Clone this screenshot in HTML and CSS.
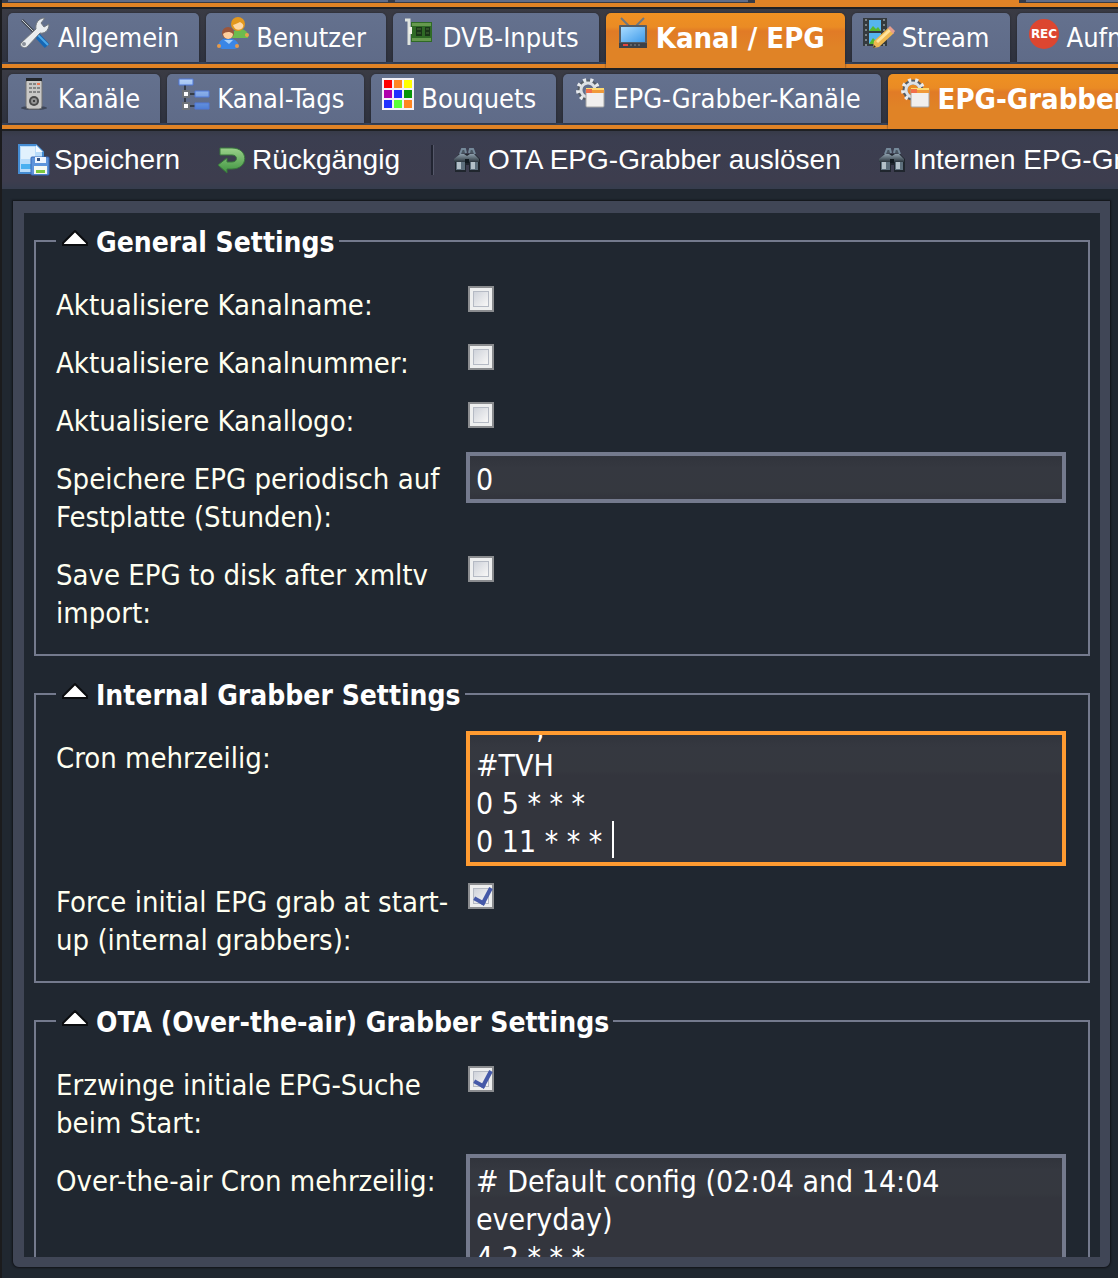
FILE: index.html
```html
<!DOCTYPE html>
<html lang="de">
<head>
  <meta charset="UTF-8">
  <meta name="viewport" content="width=device-width, initial-scale=1.0">
  <title>Tvheadend</title>
  <link rel="stylesheet" href="styles.css">
</head>
<body>
  <svg class="defs" aria-hidden="true">
    <defs>
      <linearGradient id="blue" x1="0" y1="0" x2="0" y2="1"><stop offset="0" stop-color="#b7d3f8"/><stop offset="1" stop-color="#4f7fd6"/></linearGradient>
      <linearGradient id="sky" x1="0" y1="0" x2="1" y2="1"><stop offset="0" stop-color="#a9dcff"/><stop offset="1" stop-color="#3f9bea"/></linearGradient>
      <linearGradient id="metal" x1="0" y1="0" x2="0" y2="1"><stop offset="0" stop-color="#8fa0ad"/><stop offset="1" stop-color="#2c363e"/></linearGradient>
      <linearGradient id="green" x1="0" y1="0" x2="0" y2="1"><stop offset="0" stop-color="#9ad08a"/><stop offset="1" stop-color="#3f9440"/></linearGradient>
    </defs>
    <symbol id="icon-grab" viewBox="0 0 32 32">
      <circle cx="14" cy="12" r="8" fill="none" stroke="#555d66" stroke-width="5"/>
      <circle cx="14" cy="12" r="10" fill="none" stroke="#e8ebee" stroke-width="4" stroke-dasharray="3 4"/>
      <circle cx="14" cy="12" r="7" fill="none" stroke="#dde1e5" stroke-width="3"/>
      <rect x="12" y="11" width="18" height="18" rx="1" fill="#f1efee" stroke="#a4a4a4"/>
      <path d="M12 11h18v4H12z" fill="#f09a3a"/>
      <path d="M12 10h18v2H12z" fill="#ffd970"/>
      <path d="M12 11h6v4h-6z" fill="#f2704c"/>
    </symbol>
    <symbol id="icon-find" viewBox="0 0 32 32">
      <path d="M3 15l4-5h16l5 5v13H17v-7h-3v7H3z" fill="#20262e"/>
      <path d="M2 15l6-5h4l3 2 3-2h4l5 5v3H2z" fill="url(#metal)"/>
      <path d="M8 10l2-5h3l1 4M23 10l-2-5h-3l-1 4" fill="#4a5763" stroke="#75899a" stroke-width="2"/>
      <path d="M4 18h9v8H4zM18 18h8v8h-8z" fill="#5d6f7c"/>
      <path d="M5 18h4v7H5zM19 18h4v7h-4z" fill="#b4c1c9"/>
      <path d="M13 15h4v4h-4z" fill="#121a20"/>
    </symbol>
  </svg>

  <div class="tabs-above"><i></i><i></i><i class="active"></i><i></i></div>

  <nav class="tabs">
    <a class="tab" href="#">
      <svg class="icon" viewBox="0 0 32 32"><path d="M3 3l12 12" stroke="#444b55" stroke-width="3"/><path d="M3 3l12 12" stroke="#c9d0d6" stroke-width="1"/><path d="M16 16l12 13" stroke="#1567b4" stroke-width="6"/><path d="M17 16l12 12" stroke="#4ca7e8" stroke-width="2"/><path d="M2 26L17 12c-1-5 2-11 9-11l-4 5 3 4 5-3c0 7-5 10-9 9L8 30c-3 2-8-1-6-4z" fill="#e9ecee" stroke="#71777e"/><circle cx="5" cy="27" r="2" fill="#8b9199"/></svg>
      Allgemein</a>
    <a class="tab" href="#">
      <svg class="icon" viewBox="0 0 32 32"><path d="M13 21c0-10 17-12 18-3v3z" fill="#6dbb4e"/><circle cx="30" cy="18" r="2" fill="#e9a34a"/><circle cx="21" cy="7" r="7" fill="#e3981e"/><path d="M16 8c3-1 5-2 7-3 3 2 4 3 3 5-2 4-8 4-10-2z" fill="#ffd8a5"/><path d="M1 30c0-12 20-12 21 0l-4 2H5z" fill="#3a86e6"/><path d="M7 23l5 4 4-4" fill="#a3cffb"/><circle cx="2" cy="29" r="2" fill="#e79a48"/><circle cx="20" cy="29" r="2" fill="#e79a48"/><circle cx="11" cy="16" r="6" fill="#9b563b"/><path d="M6 17c2-2 7-3 10 0 0 6-9 7-10 0z" fill="#ffcf9d"/></svg>
      Benutzer</a>
    <a class="tab" href="#">
      <svg class="icon" viewBox="0 0 32 32"><path d="M7 5h21v20H7z" fill="#2f6a25"/><path d="M8 6h19v3H8zM8 21h19v3H8z" fill="#66994e"/><path d="M12 10h6v9h-6zM21 10h5v9h-5z" fill="#1a3518"/><path d="M13 12h4M13 16h4M22 12h3M22 16h3" stroke="#4b7138"/><path d="M1 3h4v25" fill="none" stroke="#dfe4df" stroke-width="3"/><path d="M5 10h3v7H5z" fill="#f1f1e7"/></svg>
      DVB-Inputs</a>
    <a class="tab active" href="#">
      <svg class="icon" viewBox="0 0 32 32"><path d="M4 1l9 9M27 1l-9 9" stroke="#6f777f" stroke-width="2"/><rect x="2" y="8" width="28" height="23" rx="1" fill="#555d65"/><path d="M4 10h24v15H4z" fill="url(#sky)"/><path d="M2 26h28v5H2z" fill="#3d4147"/><path d="M6 28h5" stroke="#e4443c" stroke-width="2"/><path d="M13 28h12" stroke="#888" stroke-dasharray="2 2"/></svg>
      Kanal / EPG</a>
    <a class="tab" href="#">
      <svg class="icon" viewBox="0 0 32 32"><path d="M0 1h24v28H0z" fill="#343a3e"/><path d="M3 2v27M21 2v27" stroke="#7c8488" stroke-width="2" stroke-dasharray="2 3"/><path d="M6 3h12v11H6zM6 16h12v11H6z" fill="#56b5ee"/><path d="M6 14l4-5 3 3 2-2 3 4zM6 27l4-6 3 3 5-3v6z" fill="#57b82f"/><path d="M10 31l1-7 14-13 6 5-15 14z" fill="#efb850"/><path d="M13 24l13-12 2 2-13 12z" fill="#ffe39b"/><path d="M25 11l2-2 5 5-2 3z" fill="#e69e8d"/><path d="M10 31l1-3 2 2z" fill="#333"/></svg>
      Stream</a>
    <a class="tab" href="#">
      <svg class="icon" viewBox="0 0 32 32"><circle cx="16" cy="17" r="15" fill="#dc4630"/><text class="rec" x="16" y="21" text-anchor="middle">REC</text></svg>
      Aufnahmen</a>
  </nav>

  <nav class="tabs">
    <a class="tab" href="#">
      <svg class="icon" viewBox="0 0 32 32"><ellipse cx="15" cy="30" rx="13" ry="2" fill="#3e4659"/><rect x="7" y="1" width="16" height="30" rx="3" fill="#c9c8c6" stroke="#727272"/><path d="M7 0h16v3H7z" fill="#24272b"/><path d="M10 6h11M10 10h11M10 14h11" stroke="#858585" stroke-width="2" stroke-dasharray="3 1"/><path d="M18 5h3v2h-3z" fill="#ee7753"/><circle cx="15" cy="23" r="5" fill="#4b4b4b"/><circle cx="15" cy="23" r="3" fill="#949494"/><circle cx="15" cy="23" r="1" fill="#222"/></svg>
      Kanäle</a>
    <a class="tab" href="#">
      <svg class="icon" viewBox="0 0 32 32"><path d="M7 7v21M8 16h9M8 28h9" stroke="#363d48" stroke-width="2"/><path d="M1 1h14v6H1zM17 13h14v6H17zM17 25h14v6H17z" fill="url(#blue)" stroke="#5079d8"/><path d="M4 12h8v8H4zM4 24h8v8H4z" fill="#6e7379"/><path d="M6 14h4v4H6zM6 26h4v4H6z" fill="#fff"/></svg>
      Kanal-Tags</a>
    <a class="tab" href="#">
      <svg class="icon" viewBox="0 0 32 32"><path d="M0 0h32v32H0z" fill="#f4f1f7"/><path d="M2 2h8v8H2z" fill="#f00"/><path d="M12 2h8v8h-8zM22 22h8v8h-8z" fill="#ff8620"/><path d="M22 2h8v8h-8z" fill="#ff0"/><path d="M2 12h8v8H2z" fill="#b000ac"/><path d="M12 12h8v8h-8zM2 22h8v8H2z" fill="#2030ff"/><path d="M22 12h8v8h-8z" fill="#079607"/><path d="M12 22h8v8h-8z" fill="#58ff38"/></svg>
      Bouquets</a>
    <a class="tab" href="#">
      <svg class="icon"><use href="#icon-grab"/></svg>
      EPG-Grabber-Kanäle</a>
    <a class="tab active" href="#">
      <svg class="icon"><use href="#icon-grab"/></svg>
      EPG-Grabber</a>
  </nav>

  <div class="toolbar">
    <button type="button">
      <svg class="icon" viewBox="0 0 32 32"><path d="M1 1h17l7 7v21H1z" fill="#b9dcfa" stroke="#458cd2" stroke-width="2"/><path d="M3 3h14v12H3z" fill="#e1f1fd"/><path d="M18 1v7h7z" fill="#f4faff"/><path d="M3 20h10v5H3z" fill="#4bb0f0"/><rect x="13" y="13" width="18" height="18" rx="1" fill="#5e94db" stroke="#3868b7"/><path d="M17 13h11v6H17z" fill="#edf4ff"/><path d="M19 14h3v3h-3z" fill="#345485"/><path d="M16 22h13v8H16z" fill="#f5f8f3"/><path d="M18 26h9v3h-9z" fill="#7bc83d"/></svg>
      Speichern</button>
    <button type="button">
      <svg class="icon" viewBox="0 0 32 32"><path d="M4 4h12c17 0 17 21 0 21h-5v4l-9-8 9-7v4h5c6 0 6-7 0-7H4z" fill="url(#green)" stroke="#38773c"/></svg>
      Rückgängig</button>
    <span class="separator"></span>
    <button type="button">
      <svg class="icon"><use href="#icon-find"/></svg>
      OTA EPG-Grabber auslösen</button>
    <button type="button">
      <svg class="icon"><use href="#icon-find"/></svg>
      Internen EPG-Grabber auslösen</button>
  </div>

  <main class="content">
    <form class="panel">
      <fieldset>
        <legend><svg class="arrow" viewBox="0 0 26 16"><path d="M13 1L25 13v2H1v-2z"/></svg>General Settings</legend>
        <div class="row">
          <label for="up-name">Aktualisiere Kanalname:</label>
          <input type="checkbox" id="up-name">
        </div>
        <div class="row">
          <label for="up-number">Aktualisiere Kanalnummer:</label>
          <input type="checkbox" id="up-number">
        </div>
        <div class="row">
          <label for="up-logo">Aktualisiere Kanallogo:</label>
          <input type="checkbox" id="up-logo">
        </div>
        <div class="row">
          <label for="save-hours">Speichere EPG periodisch auf Festplatte (Stunden):</label>
          <input type="text" id="save-hours" value="0">
        </div>
        <div class="row">
          <label for="save-import">Save EPG to disk after xmltv import:</label>
          <input type="checkbox" id="save-import">
        </div>
      </fieldset>

      <fieldset>
        <legend><svg class="arrow" viewBox="0 0 26 16"><path d="M13 1L25 13v2H1v-2z"/></svg>Internal Grabber Settings</legend>
        <div class="row">
          <label for="cron">Cron mehrzeilig:</label>
          <div class="field">
            <textarea class="focused" id="cron">       ,
#TVH
0 5 * * *
0 11 * * *</textarea>
            <span class="caret"></span>
          </div>
        </div>
        <div class="row">
          <label for="force">Force initial EPG grab at start-up (internal grabbers):</label>
          <input type="checkbox" id="force" checked>
        </div>
      </fieldset>

      <fieldset>
        <legend><svg class="arrow" viewBox="0 0 26 16"><path d="M13 1L25 13v2H1v-2z"/></svg>OTA (Over-the-air) Grabber Settings</legend>
        <div class="row">
          <label for="ota-start">Erzwinge initiale EPG-Suche beim Start:</label>
          <input type="checkbox" id="ota-start" checked>
        </div>
        <div class="row">
          <label for="ota-cron">Over-the-air Cron mehrzeilig:</label>
          <textarea id="ota-cron"># Default config (02:04 and 14:04 everyday)
4 2 * * *
4 14 * * *</textarea>
        </div>
      </fieldset>
    </form>
  </main>

  <script>
    var cron = document.querySelector("#cron");
    cron.scrollTop = cron.scrollHeight;
  </script>
</body>
</html>
```
FILE: styles.css
```css
* {
  box-sizing: border-box;
}
body {
  display: flex;
  flex-direction: column;
  height: 100vh;
  margin: 0;
  overflow: hidden;
  border-left: 2px solid #1b1b1d;
  background-color: #202730;
  color: #fffff0;
  font: 29px/38px "DejaVu Sans Condensed", "Noto Sans", sans-serif;
}
.defs {
  position: absolute;
  width: 0;
  height: 0;
}
.icon {
  flex: none;
  width: 32px;
  height: 32px;
}

/* tabs */
.tabs-above {
  display: flex;
  flex: none;
  gap: 7px;
  height: 9px;
  padding-left: 6px;
  overflow: hidden;
  border-bottom: 2px solid #1e2024;
  background: linear-gradient(#373b47 3px, #e08326 3px);
}
.tabs-above i {
  flex: none;
  width: 353px;
  height: 2px;
  background-color: #606c88;
}
.tabs-above i:first-child {
  width: 380px;
}
.tabs-above i.active {
  width: 264px;
  height: 3px;
  background-color: #e08326;
}
.tabs {
  display: flex;
  flex: none;
  gap: 7px;
  height: 61px;
  padding: 4px 0 0 6px;
  overflow: hidden;
  border-bottom: 2px solid #1e2024;
  background: linear-gradient(#3a3b44, #2e323f 53px, #374258 53px, #374258 55px, #e08326 55px);
}
.tab {
  display: flex;
  flex: none;
  gap: 7px;
  height: 49px;
  padding: 4px 20px 0 11px;
  border-radius: 5px 5px 0 0;
  background: linear-gradient(#64718e, #5f6b88);
  box-shadow: 0 0 2px #20232b;
  color: #fff;
  font-size: 27px;
  line-height: 42px;
  white-space: nowrap;
  text-decoration: none;
}
.tab.active {
  height: 55px;
  background: linear-gradient(#ef9122, #ea8b24 14px, #e17b26 18px, #e08326 34px);
  font-size: 29px;
  font-weight: bold;
}
.rec {
  fill: #fff;
  font: bold 12px "DejaVu Sans", sans-serif;
}

/* toolbar */
.toolbar {
  display: flex;
  flex: none;
  align-items: center;
  gap: 36px;
  height: 58px;
  padding-left: 16px;
  overflow: hidden;
  background: linear-gradient(#373b48, #3b3e50 6px, #3d3d4e 50px, #363d4e);
}
.toolbar button {
  display: flex;
  flex: none;
  align-items: center;
  gap: 4px;
  padding: 0;
  border: 0;
  background: none;
  color: #fff;
  font: 28px/32px "Liberation Sans", Arial, sans-serif;
  white-space: nowrap;
}
.separator {
  width: 3px;
  height: 30px;
  margin: 0 -18px 0 -5px;
  border-left: 2px solid #222532;
  border-right: 1px solid #55586a;
}

/* settings form */
.content {
  flex: 1;
  min-height: 0;
  padding: 12px 8px 11px 11px;
}
.panel {
  height: 100%;
  padding: 9px 10px;
  overflow: hidden;
  border: 11px solid #404656;
  border-width: 12px 10px 10px 11px;
  border-radius: 0 0 6px 6px;
  box-shadow: 0 0 2px 1px #111318;
}
fieldset {
  min-width: 0;
  margin: 0 0 19px;
  padding: 18px 22px 10px 20px;
  border: 2px solid #747a8d;
}
legend {
  display: flex;
  gap: 8px;
  height: 38px;
  padding: 0 4px 0 6px;
  color: #fff;
  font-size: 28px;
  font-weight: bold;
  line-height: 42px;
}
.arrow {
  width: 26px;
  height: 16px;
  margin-top: 8px;
  fill: #fff;
  stroke: #0b0d10;
  stroke-width: 2px;
}
.row {
  display: grid;
  grid-template-columns: 400px 1fr;
  column-gap: 10px;
  align-items: start;
  padding-bottom: 9px;
}
label {
  padding: 8px 0 3px;
}
input[type="text"],
textarea {
  display: block;
  width: 100%;
  margin: 0;
  padding: 5px 6px 1px;
  border: 4px solid #747a8d;
  border-radius: 0;
  outline: 0;
  background: linear-gradient(#31343c, #353840 12px, #35383f 36px, #33353d 40px);
  color: #fff;
  font: 30px/38px "DejaVu Sans Condensed", "Noto Sans", sans-serif;
}
input[type="text"] {
  height: 51px;
}
textarea {
  height: 135px;
  overflow: hidden;
  resize: none;
}
textarea.focused {
  border-color: #ff9b31;
}
.field {
  position: relative;
}
.caret {
  position: absolute;
  left: 146px;
  bottom: 8px;
  width: 2px;
  height: 37px;
  background-color: #fff;
}
input[type="checkbox"] {
  appearance: none;
  width: 26px;
  height: 26px;
  margin: 8px 2px;
  border: 2px solid #8a8c8f;
  background: linear-gradient(135deg, #c3c8d2, #f4f4f4 75%);
  box-shadow: inset 0 0 0 3px #eeefef, inset 0 0 0 4px #b5bac4;
}
input[type="checkbox"]:checked::before {
  content: "";
  display: block;
  width: 8px;
  height: 15px;
  margin: 0 0 0 7px;
  border: solid #4559a8;
  border-width: 0 4px 4px 0;
  transform: rotate(28deg);
}
```
